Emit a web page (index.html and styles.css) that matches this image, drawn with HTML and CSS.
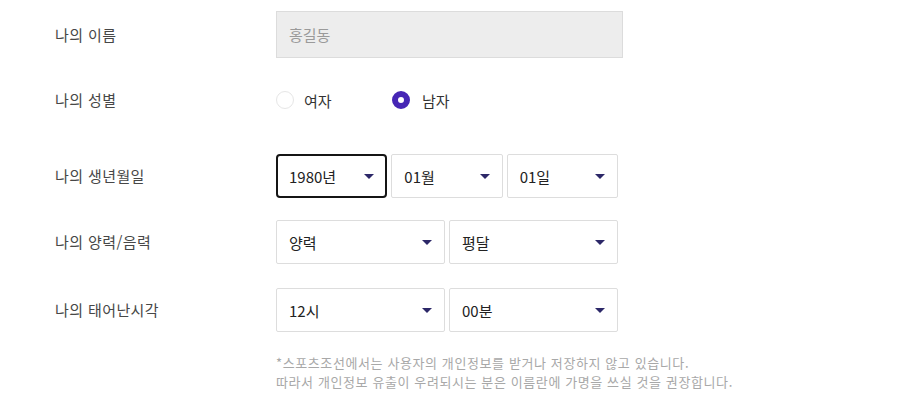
FILE: index.html
```html
<!DOCTYPE html>
<html lang="ko">
<head>
<meta charset="utf-8">
<title>나의 정보</title>
<link rel="stylesheet" href="styles.css">
</head>
<body>
<div class="form">
  <div class="row row-name">
    <div class="label">나의 이름</div>
    <div class="control">
      <div class="name-input">홍길동</div>
    </div>
  </div>

  <div class="row row-gender">
    <div class="label">나의 성별</div>
    <div class="control radios">
      <label class="radio"><span class="dot"></span><span>여자</span></label>
      <label class="radio checked"><span class="dot"></span><span>남자</span></label>
    </div>
  </div>

  <div class="row row-birth">
    <div class="label">나의 생년월일</div>
    <div class="control selects">
      <div class="select focused"><span>1980년</span><svg class="arrow" width="10" height="5" viewBox="0 0 10 5"><polygon points="0,0 10,0 5,5"/></svg></div>
      <div class="select"><span>01월</span><svg class="arrow" width="10" height="5" viewBox="0 0 10 5"><polygon points="0,0 10,0 5,5"/></svg></div>
      <div class="select"><span>01일</span><svg class="arrow" width="10" height="5" viewBox="0 0 10 5"><polygon points="0,0 10,0 5,5"/></svg></div>
    </div>
  </div>

  <div class="row row-cal">
    <div class="label">나의 양력/음력</div>
    <div class="control selects">
      <div class="select"><span>양력</span><svg class="arrow" width="10" height="5" viewBox="0 0 10 5"><polygon points="0,0 10,0 5,5"/></svg></div>
      <div class="select"><span>평달</span><svg class="arrow" width="10" height="5" viewBox="0 0 10 5"><polygon points="0,0 10,0 5,5"/></svg></div>
    </div>
  </div>

  <div class="row row-time">
    <div class="label">나의 태어난시각</div>
    <div class="control selects">
      <div class="select"><span>12시</span><svg class="arrow" width="10" height="5" viewBox="0 0 10 5"><polygon points="0,0 10,0 5,5"/></svg></div>
      <div class="select"><span>00분</span><svg class="arrow" width="10" height="5" viewBox="0 0 10 5"><polygon points="0,0 10,0 5,5"/></svg></div>
    </div>
  </div>

  <div class="note">
    <p>*스포츠조선에서는 사용자의 개인정보를 받거나 저장하지 않고 있습니다.</p>
    <p>따라서 개인정보 유출이 우려되시는 분은 이름란에 가명을 쓰실 것을 권장합니다.</p>
  </div>
</div>
</body>
</html>
```

FILE: styles.css
```css
html, body {
  margin: 0;
  padding: 0;
  background: #ffffff;
}

body {
  font-family: "Noto Sans CJK KR", "Noto Sans", sans-serif;
  color: #333333;
}

.form {
  display: flex;
  flex-direction: column;
  padding: 11px 0 0 55px;
}

.row {
  display: flex;
  align-items: center;
}

.label {
  width: 221px;
  flex: none;
  font-size: 15px;
  letter-spacing: 0.4px;
  color: #474747;
  line-height: 20px;
}

.control {
  display: flex;
  align-items: center;
}

.row-name { height: 47px; }
.row-gender { height: 44px; margin-top: 20px; }
.row-birth { height: 44px; margin-top: 32px; }
.row-cal { height: 44px; margin-top: 22px; }
.row-time { height: 44px; margin-top: 24px; }

.name-input {
  box-sizing: border-box;
  width: 347px;
  height: 47px;
  background: #ededed;
  border: 1px solid #dcdcdc;
  padding-left: 12px;
  display: flex;
  align-items: center;
  font-size: 15px;
  color: #9a9a9a;
}

.radio {
  display: flex;
  align-items: center;
  font-size: 15px;
  color: #333333;
}

.radio:first-child {
  width: 116px;
}

.radio .dot {
  box-sizing: border-box;
  width: 18px;
  height: 18px;
  border-radius: 50%;
  border: 1px solid #e6e6e6;
  background: #ffffff;
  margin-right: 10px;
}

.radio.checked .dot {
  border: 6px solid #4626b5;
  background: #ffffff;
  margin-right: 12px;
}

.selects {
  width: 342px;
  gap: 4px;
}

.select {
  box-sizing: border-box;
  flex: 1 1 0;
  height: 44px;
  border: 1px solid #dddddd;
  border-radius: 2px;
  display: flex;
  align-items: center;
  justify-content: space-between;
  padding: 0 12px 0 12px;
  font-size: 15px;
  color: #222222;
  background: #ffffff;
}

.select.focused {
  border: 2px solid #151515;
  border-radius: 4px;
  padding: 0 11px 0 11px;
}

.arrow {
  display: block;
  fill: #2c2868;
}

.note {
  margin: 21px 0 0 221px;
  font-size: 13px;
  letter-spacing: 0.6px;
  line-height: 19px;
  color: #a8a8a8;
}

.note p {
  margin: 0;
}
```
